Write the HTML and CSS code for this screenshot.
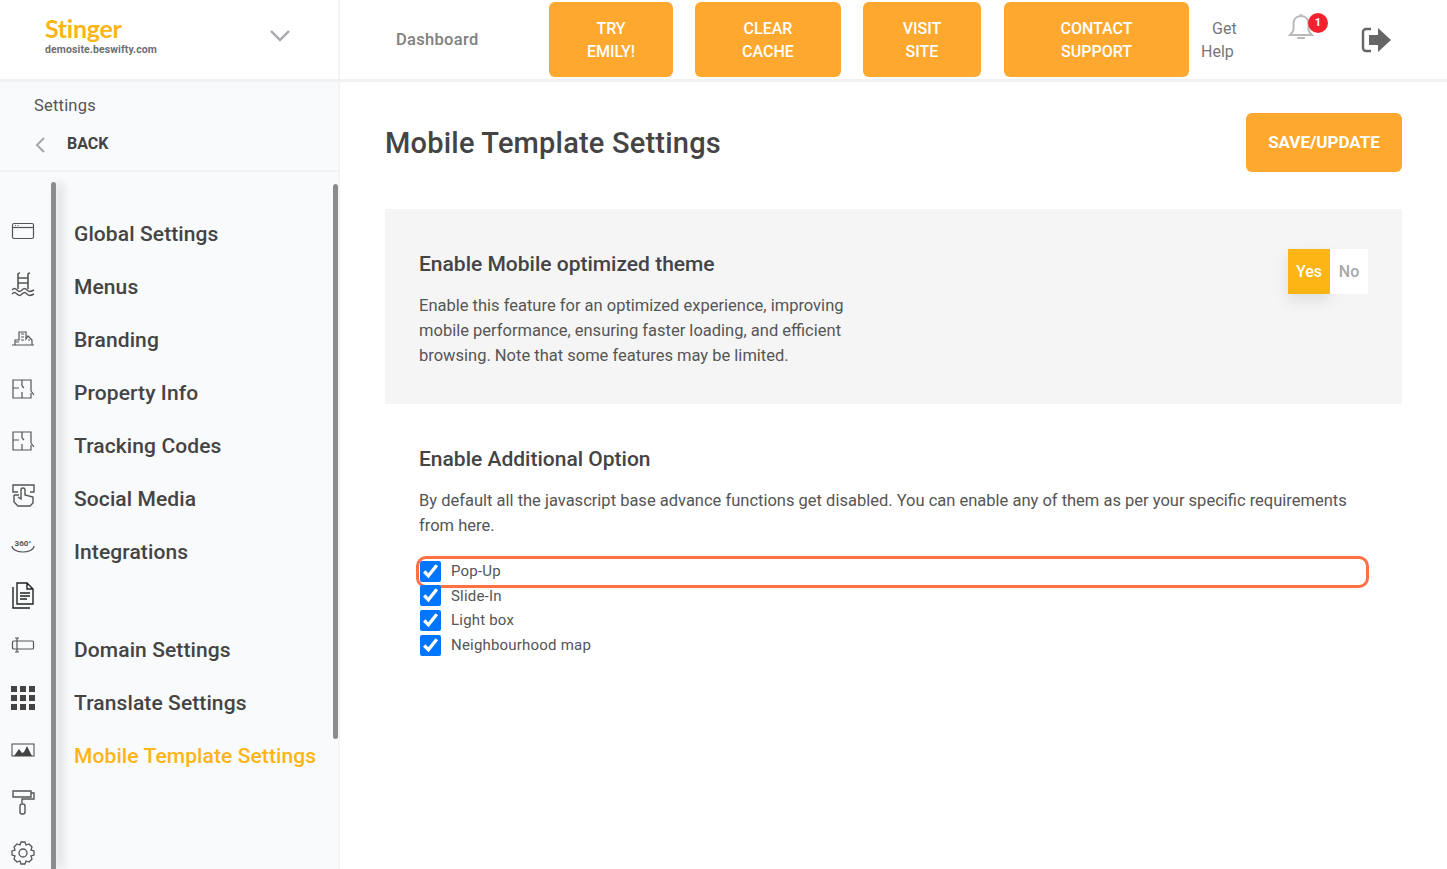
FILE: index.html
```html
<!DOCTYPE html>
<html lang="en">
<head>
<meta charset="utf-8">
<title>Mobile Template Settings</title>
<link rel="stylesheet" href="styles.css">
</head>
<body>
<div class="app">
  <header class="topbar">
    <div class="brand">
      <div class="brand-text">
        <div class="brand-name">Stinger</div>
        <div class="brand-site">demosite.beswifty.com</div>
      </div>
      <svg class="brand-caret" width="22" height="14" viewBox="0 0 22 14"><path d="M2 2l9 9 9-9" fill="none" stroke="#a5a7ab" stroke-width="2.4"/></svg>
    </div>
    <nav class="topnav">
      <a class="dash">Dashboard</a>
      <a class="btn btn-try">TRY<br>EMILY!</a>
      <a class="btn btn-cache">CLEAR<br>CACHE</a>
      <a class="btn btn-site">VISIT<br>SITE</a>
      <a class="btn btn-support">CONTACT<br>SUPPORT</a>
      <a class="help"><span>Get</span><span>Help</span></a>
      <div class="bell">
        <svg width="28" height="30" viewBox="0 0 28 30"><path d="M13 3.5a1.6 1.6 0 0 1 2 0M14 4c-5 0-7.5 3.500-7.500 8v5c0 2.500-1.500 4-3.500 6h22c-2-2-3.500-3.500-3.500-6v-5c0-4.500-2.500-8-7.500-8z" fill="none" stroke="#b9b9b9" stroke-width="2"/><path d="M11 26h6" stroke="#b9b9b9" stroke-width="2.200" stroke-linecap="round"/></svg>
        <span class="badge">1</span>
      </div>
      <svg class="logout" width="32" height="28" viewBox="0 0 32 28"><path d="M10 3H5a3 3 0 0 0-3 3v16a3 3 0 0 0 3 3h5" fill="none" stroke="#666" stroke-width="2.400"/><path d="M8 9h9V2l13 12-13 12v-7H8z" fill="#666"/></svg>
    </nav>
  </header>
  <div class="body">
    <aside class="sidebar">
      <div class="crumbs">
        <div class="crumb-title">Settings</div>
        <div class="back">
          <svg width="12" height="18" viewBox="0 0 12 18"><path d="M10 2L3 9l7 7" fill="none" stroke="#a5a7ab" stroke-width="2"/></svg>
          <span>BACK</span>
        </div>
      </div>
      <div class="side-main">
        <div class="rail">
          <svg class="ri" width="24" height="20" viewBox="0 0 24 20"><rect x="1.500" y="2.500" width="21" height="15" rx="1.500" fill="none" stroke="#555" stroke-width="1.200"/><path d="M1.500 6.500h21" stroke="#555" stroke-width="1.200"/><path d="M4 4.500h1M6.500 4.500h1" stroke="#555"/></svg>
          <svg class="ri" width="24" height="28" viewBox="0 0 24 28"><path d="M7 3c0-1 1-1 2-1M7 3v15M17 3c0-1 1-1 2-1M17 3v15M7 7h10M7 12h10" fill="none" stroke="#555" stroke-width="1.600"/><path d="M1 19c2-2 3-2 5 0s3 2 5 0 3-2 5 0 3 2 7 0M1 23c2-2 3-2 5 0s3 2 5 0 3-2 5 0 3 2 7 0" fill="none" stroke="#555" stroke-width="1.500"/></svg>
          <svg class="ri" width="24" height="20" viewBox="0 0 24 20"><path d="M1 18h22M4 18v-5h4v-8h7v7l2-3 4 4v5M10 7h3M10 10h3M10 13h3M5 15h3M17 13h2" fill="none" stroke="#555" stroke-width="1.200"/></svg>
          <svg class="ri" width="24" height="22" viewBox="0 0 24 22"><path d="M20 15v5H2V2h18v11M11 2v6M11 14v6M2 10h6M11 8l2 2M20 13l3 4" fill="none" stroke="#555" stroke-width="1.200"/></svg>
          <svg class="ri" width="24" height="22" viewBox="0 0 24 22"><path d="M20 15v5H2V2h18v11M11 2v6M11 14v6M2 10h6M11 8l2 2M20 13l3 4" fill="none" stroke="#555" stroke-width="1.200"/></svg>
          <svg class="ri" width="24" height="24" viewBox="0 0 24 24"><path d="M7 9H2V2h21v7h-4M3 12h5M3 12v7l4 4h12l3-3v-6l-8-2V7a2 2 0 0 0-4 0v9l-3-2" fill="none" stroke="#555" stroke-width="1.400"/></svg>
          <svg class="ri" width="24" height="16" viewBox="0 0 24 16"><path d="M1 8c0 4 6 6 11 6s11-2 11-6" fill="none" stroke="#555" stroke-width="1.200"/><text x="12" y="8" text-anchor="middle" class="t360">360°</text></svg>
          <svg class="ri" width="24" height="28" viewBox="0 0 24 28"><path d="M6 2h10l6 6v15H6zM16 2v6h6M2 6v21h17M9 12h10M9 15h10M9 18h7" fill="none" stroke="#222" stroke-width="1.400"/></svg>
          <svg class="ri" width="24" height="16" viewBox="0 0 24 16"><rect x="1.500" y="4" width="21" height="8" rx="1" fill="none" stroke="#555" stroke-width="1.200"/><path d="M4 1h4M6 1v14M4 15h4" fill="none" stroke="#555" stroke-width="1.200"/></svg>
          <svg class="ri" width="24" height="24" viewBox="0 0 24 24"><path fill="#444" d="M0 0h6v6H0zM9 0h6v6H9zM18 0h6v6h-6zM0 9h6v6H0zM9 9h6v6H9zM18 9h6v6h-6zM0 18h6v6H0zM9 18h6v6H9zM18 18h6v6h-6z"/></svg>
          <svg class="ri" width="24" height="16" viewBox="0 0 24 16"><rect x="1" y="2" width="22" height="12" fill="none" stroke="#444" stroke-width="1"/><path d="M3 14l5-7 3 4 2-1 3-6 5 10z" fill="#444"/></svg>
          <svg class="ri" width="24" height="28" viewBox="0 0 24 28"><path d="M2 3h18v6H2zM20 5h3v6H11v4" fill="none" stroke="#555" stroke-width="1.400"/><rect x="9" y="16" width="5" height="10" rx="2" fill="none" stroke="#555" stroke-width="1.400"/></svg>
          <svg class="ri" width="24" height="24" viewBox="0 0 24 24"><circle cx="12" cy="12" r="4" fill="none" stroke="#555" stroke-width="1.300"/><path d="M10 1h4l1 3 3-1 3 3-1 3 3 1v4l-3 1 1 3-3 3-3-1-1 3h-4l-1-3-3 1-3-3 1-3-3-1v-4l3-1-1-3 3-3 3 1z" fill="none" stroke="#555" stroke-width="1.300"/></svg>
        </div>
        <div class="rail-bar"></div>
        <ul class="menu">
          <li>Global Settings</li>
          <li>Menus</li>
          <li>Branding</li>
          <li>Property Info</li>
          <li>Tracking Codes</li>
          <li>Social Media</li>
          <li>Integrations</li>
          <li class="gap">Domain Settings</li>
          <li>Translate Settings</li>
          <li class="active">Mobile Template Settings</li>
        </ul>
        <div class="menu-bar"></div>
      </div>
    </aside>
    <main class="content">
      <div class="page-head">
        <h1>Mobile Template Settings</h1>
        <a class="save">SAVE/UPDATE</a>
      </div>
      <section class="panel">
        <div class="panel-text">
          <h2>Enable Mobile optimized theme</h2>
          <p>Enable this feature for an optimized experience, improving mobile performance, ensuring faster loading, and efficient browsing. Note that some features may be limited.</p>
        </div>
        <div class="toggle"><span class="yes">Yes</span><span class="no">No</span></div>
      </section>
      <section class="options">
        <h2>Enable Additional Option</h2>
        <p>By default all the javascript base advance functions get disabled. You can enable any of them as per your specific requirements from here.</p>
        <div class="checks">
          <label class="check"><input type="checkbox" checked>Pop-Up<span class="highlight"></span></label>
          <label class="check"><input type="checkbox" checked>Slide-In</label>
          <label class="check"><input type="checkbox" checked>Light box</label>
          <label class="check"><input type="checkbox" checked>Neighbourhood map</label>
        </div>
      </section>
    </main>
  </div>
</div>
</body>
</html>
```
FILE: styles.css
```css
* { box-sizing: border-box; }
html, body { margin: 0; height: 100%; overflow: hidden; }
body { font-family: Roboto, "Liberation Sans", sans-serif; color: #444; background: #fff; }
.app { height: 869px; display: flex; flex-direction: column; }

.topbar { height: 82px; flex: none; display: flex; border-bottom: 3px solid #f1f1f1; }
.brand { width: 340px; flex: none; display: flex; align-items: center; justify-content: space-between; padding: 0 47px 12px 45px; border-right: 2px solid #f3f3f3; }
.brand-name { font-family: Lato, sans-serif; font-size: 25px; font-weight: 700; line-height: 26px; color: #fdb515; margin-top: 4px; letter-spacing: -0.3px; }
.brand-site { font-size: 10.500px; font-weight: 700; color: #6c6f75; line-height: 14px; margin-top: 2px; letter-spacing: 0.1px; }
.brand-caret { margin-top: 4px; }

.topnav { flex: 1; display: flex; align-items: flex-start; padding-top: 2px; position: relative; }
.dash { width: 209px; padding: 28px 0 0 56px; font-size: 16.500px; font-weight: 500; color: #808080; letter-spacing: 0.3px; line-height: 20px; }
.btn { height: 75px; background: #fea82f; color: #fff; border-radius: 6px; font-size: 16px; font-weight: 500; line-height: 23px; text-align: center; padding-top: 15px; flex: none; }
.btn-try { width: 124px; margin-right: 22px; }
.btn-cache { width: 146px; margin-right: 22px; }
.btn-site { width: 118px; margin-right: 23px; }
.btn-support { width: 185px; }
.help { display: flex; flex-direction: column; width: 62px; padding: 15px 0 0 12px; font-size: 16px; line-height: 23px; color: #777; }
.help span:first-child { padding-left: 11px; }
.bell { position: relative; width: 28px; margin: 10px 0 0 36px; height: 32px; }
.badge { position: absolute; left: 21px; top: 1px; width: 20px; height: 20px; border-radius: 50%; background: #f5222d; color: #fff; font-size: 11px; font-weight: 700; line-height: 20px; text-align: center; }
.logout { margin: 24px 0 0 46px; }

.body { flex: 1; display: flex; min-height: 0; }
.sidebar { width: 340px; flex: none; background: #f9fafc; border-right: 2px solid #f3f3f3; display: flex; flex-direction: column; overflow: hidden; }
.crumbs { height: 90px; flex: none; border-bottom: 2px solid #f1f2f4; padding: 13px 0 0 34px; }
.crumb-title { font-size: 16.500px; line-height: 21px; color: #555; letter-spacing: 0.2px; }
.back { display: flex; align-items: center; margin-top: 17px; gap: 21px; font-size: 16px; font-weight: 700; line-height: 20px; color: #444; }
.back svg { margin-top: 3px; }

.side-main { flex: 1; display: flex; min-height: 0; padding-top: 10px; overflow: hidden; }
.rail { width: 51px; flex: none; display: flex; flex-direction: column; align-items: flex-start; padding: 33px 0 0 11px; }
.ri { display: block; margin-bottom: 0; flex: none; }
.ri:nth-child(1) { margin-top: 6px; }
.ri:nth-child(2) { margin-top: 30px; }
.ri:nth-child(3) { margin-top: 28px; }
.ri:nth-child(4) { margin-top: 31px; }
.ri:nth-child(5) { margin-top: 30px; }
.ri:nth-child(6) { margin-top: 31px; }
.ri:nth-child(7) { margin-top: 31px; }
.ri:nth-child(8) { margin-top: 27px; }
.ri:nth-child(9) { margin-top: 28px; }
.ri:nth-child(10) { margin-top: 33px; }
.ri:nth-child(11) { margin-top: 32px; }
.ri:nth-child(12) { margin-top: 30px; }
.ri:nth-child(13) { margin-top: 25px; }
.t360 { font-size: 8px; font-weight: 700; fill: #555; font-family: Roboto, sans-serif; }
.rail-bar { width: 5px; height: 100%; flex: none; background: #8c8c8c; border-radius: 3px 3px 0 0; box-shadow: 6px 0 10px rgba(0, 0, 0, 0.16); }
.menu { list-style: none; margin: 0; padding: 37px 0 0 18px; width: 277px; flex: none; }
.menu li { height: 53px; font-size: 21px; font-weight: 500; line-height: 30px; color: #444; letter-spacing: 0.1px; white-space: nowrap; }
.menu li.gap { margin-top: 45px; }
.menu li.active { color: #fdb515; }
.menu-bar { width: 5px; height: 555px; margin: 2px 0 0 0; flex: none; background: #8c8c8c; border-radius: 3px; }

.content { flex: 1; padding: 31px 45px 0 45px; min-width: 0; }
.page-head { display: flex; justify-content: space-between; align-items: center; height: 59px; margin-bottom: 37px; }
h1 { margin: 0; font-size: 29px; font-weight: 500; color: #444; letter-spacing: 0.2px; }
.save { width: 156px; height: 59px; background: #fea82f; color: #fff; border-radius: 6px; font-size: 17px; font-weight: 700; line-height: 59px; text-align: center; }
.panel { height: 195px; background: #f5f5f5; display: flex; justify-content: space-between; padding: 40px 34px 0 34px; }
h2 { margin: 0; font-size: 21px; font-weight: 500; line-height: 30px; color: #444; }
.panel-text { width: 450px; }
p { margin: 14px 0 0; font-size: 16.500px; line-height: 25px; color: #555; }
.toggle { display: flex; height: 45px; }
.toggle span { width: 42px; display: flex; align-items: center; justify-content: center; font-size: 16px; font-weight: 500; }
.toggle .yes { background: #fdb515; color: #fff; box-shadow: 0 6px 16px rgba(0, 0, 0, 0.1); }
.toggle .no { width: 38px; background: #fff; color: #a9a9a9; }
.options { padding: 40px 34px 0; }
.checks { margin-top: 21px; display: flex; flex-direction: column; }
.check { position: relative; display: flex; align-items: center; height: 24.600px; font-size: 15px; color: #555; letter-spacing: 0.2px; }
.check input { width: 21px; height: 21px; margin: 0 10px 0 1px; accent-color: #0075ff; flex: none; }
.highlight { position: absolute; left: -3px; top: -3px; width: 953px; height: 32px; border: 3.500px solid #ff7043; border-radius: 10px; }
```
